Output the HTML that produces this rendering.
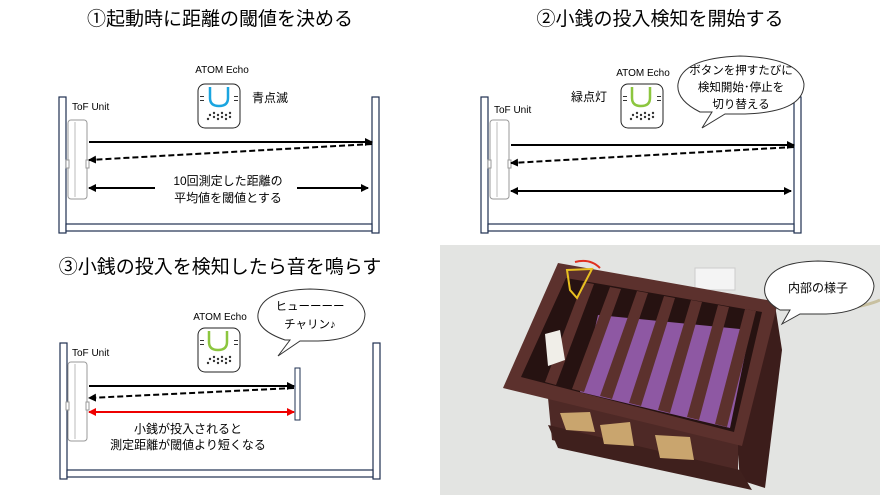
<!DOCTYPE html>
<html><head><meta charset="utf-8"><style>
html,body{margin:0;padding:0;background:#fff;}
svg{display:block;font-family:"Liberation Sans","Noto Sans CJK JP",sans-serif;}
</style></head><body>
<svg width="880" height="495" viewBox="0 0 880 495" xmlns="http://www.w3.org/2000/svg">
<defs>
<marker id="ah" markerWidth="8" markerHeight="8" refX="7" refY="4" orient="auto" markerUnits="userSpaceOnUse"><path d="M0,0 L8,4 L0,8 z" fill="#000"/></marker>
<marker id="ahr" markerWidth="8" markerHeight="8" refX="7" refY="4" orient="auto" markerUnits="userSpaceOnUse"><path d="M0,0 L8,4 L0,8 z" fill="#e00"/></marker>
<g id="echo"><rect x="0" y="0" width="42" height="44" rx="7" fill="#fff" stroke="#222" stroke-width="1"/>
<g fill="#333"><circle cx="12" cy="31" r="1.2"/><circle cx="16" cy="29" r="1.2"/><circle cx="16" cy="33" r="1.2"/><circle cx="20" cy="31" r="1.2"/><circle cx="24" cy="29" r="1.2"/><circle cx="24" cy="33" r="1.2"/><circle cx="28" cy="31" r="1.2"/><circle cx="32" cy="29" r="1.2"/><circle cx="32" cy="33" r="1.2"/><circle cx="10" cy="35" r="1.2"/><circle cx="20" cy="35" r="1.2"/><circle cx="28" cy="35" r="1.2"/>
<rect x="2" y="12" width="4" height="1"/><rect x="2" y="16" width="4" height="1"/><rect x="36" y="12" width="4" height="1"/><rect x="36" y="16" width="4" height="1"/></g></g>
<g id="tof"><rect x="0" y="0" width="19" height="79" rx="3" fill="#fff" stroke="#999"/><line x1="7" y1="2" x2="7" y2="77" stroke="#bbb"/><rect x="-2" y="40" width="3" height="8" fill="#fff" stroke="#999"/><rect x="18" y="40" width="3" height="8" fill="#fff" stroke="#999"/></g>
<g id="frame"><rect x="0" y="0" width="7" height="136" fill="#fff" stroke="#1f3050" stroke-width="1.2"/><rect x="313" y="0" width="7" height="136" fill="#fff" stroke="#1f3050" stroke-width="1.2"/><rect x="7" y="127" width="306" height="7" fill="#fff" stroke="#1f3050" stroke-width="1.2"/></g>
</defs>

<!-- Panel 1 -->
<text x="220" y="25" font-size="19" text-anchor="middle" fill="#000">①起動時に距離の閾値を決める</text>
<use href="#frame" x="59" y="97"/>
<use href="#tof" x="68" y="120"/>
<text x="72" y="110" font-size="10">ToF Unit</text>
<text x="222" y="73" font-size="10" text-anchor="middle">ATOM Echo</text>
<use href="#echo" x="198" y="84"/>
<path d="M210,87 L210,98 Q210,106 219,106 Q228,106 228,98 L228,87" fill="none" stroke="#1aa5e0" stroke-width="2.5"/>
<text x="252" y="102" font-size="12">青点滅</text>
<line x1="89" y1="142" x2="372" y2="142" stroke="#000" stroke-width="2" marker-end="url(#ah)"/>
<line x1="372" y1="144" x2="89" y2="160" stroke="#000" stroke-width="2" stroke-dasharray="6,3" marker-end="url(#ah)"/>
<line x1="155" y1="188" x2="89" y2="188" stroke="#000" stroke-width="2" marker-end="url(#ah)"/>
<line x1="297" y1="188" x2="368" y2="188" stroke="#000" stroke-width="2" marker-end="url(#ah)"/>
<text x="228" y="185" font-size="12" text-anchor="middle">10回測定した距離の</text>
<text x="228" y="202" font-size="12" text-anchor="middle">平均値を閾値とする</text>

<!-- Panel 2 -->
<text x="660" y="25" font-size="19" text-anchor="middle">②小銭の投入検知を開始する</text>
<use href="#frame" x="481" y="97"/>
<use href="#tof" x="490" y="120"/>
<text x="494" y="113" font-size="10">ToF Unit</text>
<text x="643" y="76" font-size="10" text-anchor="middle">ATOM Echo</text>
<use href="#echo" x="621" y="84"/>
<path d="M632,87 L632,98 Q632,106 641,106 Q650,106 650,98 L650,87" fill="none" stroke="#8cc63f" stroke-width="2.5"/>
<text x="571" y="101" font-size="12">緑点灯</text>
<line x1="511" y1="145" x2="794" y2="145" stroke="#000" stroke-width="2" marker-end="url(#ah)"/>
<line x1="794" y1="147" x2="511" y2="163" stroke="#000" stroke-width="2" stroke-dasharray="6,3" marker-end="url(#ah)"/>
<line x1="640" y1="191" x2="511" y2="191" stroke="#000" stroke-width="2" marker-end="url(#ah)"/>
<line x1="640" y1="191" x2="791" y2="191" stroke="#000" stroke-width="2" marker-end="url(#ah)"/>
<path d="M700,112 Q676,100 678,84 Q682,58 740,56 Q800,58 804,84 Q804,112 745,114 L725,114 L702,128 L712,112 Z" fill="#fff" stroke="#333"/>
<text x="741" y="74" font-size="11.5" text-anchor="middle">ボタンを押すたびに</text>
<text x="741" y="91" font-size="11.5" text-anchor="middle">検知開始･停止を</text>
<text x="741" y="108" font-size="11.5" text-anchor="middle">切り替える</text>

<!-- Panel 3 -->
<text x="220" y="273" font-size="19" text-anchor="middle">③小銭の投入を検知したら音を鳴らす</text>
<use href="#frame" x="60" y="343"/>
<use href="#tof" x="68" y="362"/>
<text x="72" y="356" font-size="10">ToF Unit</text>
<text x="220" y="320" font-size="10" text-anchor="middle">ATOM Echo</text>
<use href="#echo" x="198" y="328"/>
<path d="M209,331 L209,342 Q209,350 218,350 Q227,350 227,342 L227,331" fill="none" stroke="#8cc63f" stroke-width="2.5"/>
<rect x="295" y="368" width="5" height="52" fill="#fff" stroke="#1f3050"/>
<line x1="89" y1="386" x2="294" y2="386" stroke="#000" stroke-width="2" marker-end="url(#ah)"/>
<line x1="294" y1="388" x2="89" y2="398" stroke="#000" stroke-width="2" stroke-dasharray="6,3" marker-end="url(#ah)"/>
<line x1="190" y1="412" x2="89" y2="412" stroke="#e00" stroke-width="2" marker-end="url(#ahr)"/>
<line x1="190" y1="412" x2="294" y2="412" stroke="#e00" stroke-width="2" marker-end="url(#ahr)"/>
<text x="188" y="433" font-size="12" text-anchor="middle">小銭が投入されると</text>
<text x="188" y="449" font-size="12" text-anchor="middle">測定距離が閾値より短くなる</text>
<path d="M285,340 Q256,330 258,314 Q262,290 310,289 Q362,290 365,314 Q364,340 318,341 L300,341 L278,356 L290,340 Z" fill="#fff" stroke="#333"/>
<text x="310" y="310" font-size="11.5" text-anchor="middle">ヒューーーー</text>
<text x="310" y="328" font-size="11.5" text-anchor="middle">チャリン♪</text>

<!-- Photo -->
<rect x="440" y="245" width="440" height="250" fill="#e3e4e2"/>
<path d="M840,310 Q870,305 880,300" stroke="#c8c0a0" stroke-width="3" fill="none"/>
<rect x="695" y="268" width="40" height="22" fill="#f4f4f4" stroke="#ccc"/>
<!-- right side face -->
<path d="M775,305 L782,350 L765,488 L740,480 L737,442 Z" fill="#3c1d1b"/>
<!-- front face -->
<path d="M503,386 L738,444 L738,482 L552,440 L548,398 Z" fill="#4e2926"/>
<path d="M548,425 L740,470 L752,490 L558,448 Z" fill="#3f201d"/>
<!-- top rim -->
<path d="M558,263 L778,302 L742,446 L503,388 Z" fill="#5c312d"/>
<path d="M566,278 L762,312 L734,432 L521,377 Z" fill="#261211"/>
<path d="M598,315 L750,330 L730,428 L580,392 Z" fill="#8e58a3"/>
<g fill="#5c312d">
<path d="M583,282 L594,284 L556,385 L545,382 Z"/>
<path d="M610,287 L621,289 L584,392 L572,389 Z"/>
<path d="M637,291 L648,293 L612,399 L600,396 Z"/>
<path d="M664,296 L675,298 L641,406 L629,403 Z"/>
<path d="M691,300 L702,302 L670,413 L658,410 Z"/>
<path d="M718,305 L729,307 L699,420 L687,417 Z"/>
<path d="M745,309 L756,311 L727,427 L715,424 Z"/>
</g>
<path d="M567,270 L592,269 L577,298 L570,290 Z" fill="none" stroke="#e8c020" stroke-width="2"/>
<path d="M575,262 Q590,258 600,268" stroke="#e03020" stroke-width="2" fill="none"/>
<path d="M545,334 L560,330 L565,360 L548,366 Z" fill="#f0eee8"/>
<path d="M560,413 L590,412 L595,432 L566,430 Z M600,425 L630,422 L634,446 L604,444 Z M655,435 L690,437 L694,460 L660,458 Z" fill="#c9a56e"/>
<path d="M780,310 Q762,300 765,286 Q770,262 818,261 Q872,262 874,286 Q872,312 826,314 L800,314 L782,324 L790,310 Z" fill="#fff" stroke="#333"/>
<text x="818" y="292" font-size="12" text-anchor="middle">内部の様子</text>
</svg>
</body></html>
